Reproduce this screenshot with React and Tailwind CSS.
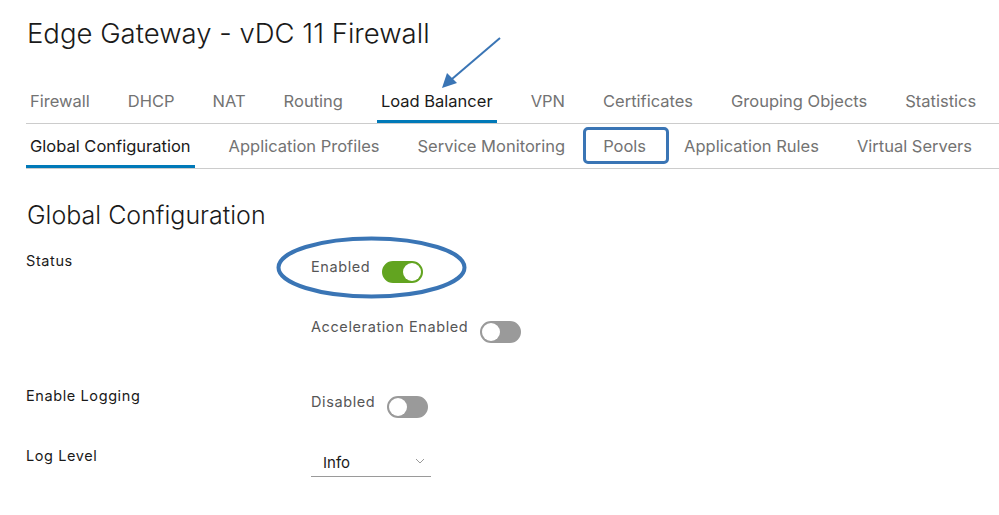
import React from "react";

const font = { fontFamily: "Inter, 'Noto Sans', sans-serif" };

function Toggle({ on }) {
  return on ? (
    <div className="w-[41px] h-[22px] rounded-full bg-[#62a420] border-2 border-[#62a420] flex items-center justify-end">
      <div className="w-[18px] h-[18px] rounded-full bg-white" />
    </div>
  ) : (
    <div className="w-[41px] h-[22px] rounded-full bg-[#9a9a9a] border-2 border-[#9a9a9a] flex items-center justify-start">
      <div className="w-[18px] h-[18px] rounded-full bg-white" />
    </div>
  );
}

export default function App() {
  const top = ["Firewall", "DHCP", "NAT", "Routing", "Load Balancer", "VPN", "Certificates", "Grouping Objects", "Statistics"];
  const sub = ["Global Configuration", "Application Profiles", "Service Monitoring", "Pools", "Application Rules", "Virtual Servers"];
  return (
    <div className="relative w-[999px] h-[515px] bg-white overflow-hidden" style={font}>
      <div className="pl-[26px]">
        <h1 className="pt-[15px] text-[27.5px] leading-[36px] font-light text-[#1a1a1a] pl-[1px] whitespace-nowrap">Edge Gateway - vDC 11 Firewall</h1>
        <div className="mt-[39px] flex border-b border-[#cccccc] h-[34px]">
          {top.map((t) => (
            <div key={t} className={"relative shrink-0 whitespace-nowrap px-[4px] mr-[30px] text-[16.5px] leading-[22px] " + (t === "Load Balancer" ? "text-[#1a1a1a]" : "text-[#737373]")}>
              {t}
              {t === "Load Balancer" && <div className="absolute left-0 right-0 top-[30px] h-[3px] bg-[#0079b8]" />}
            </div>
          ))}
        </div>
        <div className="flex border-b border-[#cccccc] h-[45px] pt-[11px]">
          {sub.map((t) => (
            <div key={t} className={"relative shrink-0 whitespace-nowrap px-[4px] mr-[30px] text-[16.5px] leading-[22px] " + (t === "Global Configuration" ? "text-[#1a1a1a]" : "text-[#737373]")}>
              {t}
              {t === "Global Configuration" && <div className="absolute left-0 right-0 top-[30px] h-[3px] bg-[#0079b8]" />}
              {t === "Pools" && <div className="absolute left-[-16px] right-[-19px] top-[-8px] h-[37px] border-[3px] border-[#3a75b5] rounded-[5px]" />}
            </div>
          ))}
        </div>
        <h2 className="mt-[31px] text-[25px] leading-[30px] font-light text-[#1a1a1a] pl-[1px]">Global Configuration</h2>
        <div className="mt-[22px] grid grid-cols-[285px_1fr] items-start text-[14.5px] leading-[18px] tracking-[0.6px]">
          <div className="text-[#1a1a1a]">Status</div>
          <div className="pt-[6px]">
            <div className="flex items-start gap-[12px]">
              <span className="text-[#565656]">Enabled</span>
              <div className="mt-[3px]"><Toggle on /></div>
            </div>
            <div className="flex items-start gap-[12px] mt-[35px]">
              <span className="text-[#565656]">Acceleration Enabled</span>
              <div className="mt-[3px]"><Toggle /></div>
            </div>
          </div>
          <div className="text-[#1a1a1a] mt-[44px]">Enable Logging</div>
          <div className="mt-[50px]">
            <div className="flex items-start gap-[12px]">
              <span className="text-[#565656]">Disabled</span>
              <div className="mt-[3px]"><Toggle /></div>
            </div>
          </div>
          <div className="text-[#1a1a1a] mt-[29px]">Log Level</div>
          <div className="mt-[35px]">
            <div className="w-[120px] h-[24px] border-b border-[#9a9a9a] flex items-start justify-between pl-[12px] pr-[6px]">
              <span className="text-[#1a1a1a] text-[15px] leading-[18px] pt-[1px] tracking-normal">Info</span>
              <svg width="10" height="6" viewBox="0 0 10 6" className="mt-[5px]"><path d="M1 1 L5 5 L9 1" fill="none" stroke="#9a9a9a" strokeWidth="1" /></svg>
            </div>
          </div>
        </div>
      </div>
      <svg className="absolute left-0 top-0 pointer-events-none" width="999" height="515">
        <ellipse cx="371.5" cy="267.5" rx="93" ry="29" fill="none" stroke="#3a75b5" strokeWidth="4" />
        <line x1="500" y1="38" x2="452" y2="79" stroke="#3a75b5" strokeWidth="2" />
        <polygon points="442,88 447,73 457,83" fill="#3a75b5" />
      </svg>
    </div>
  );
}
